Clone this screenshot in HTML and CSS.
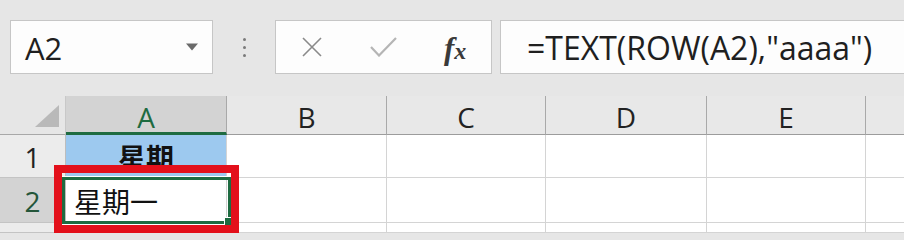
FILE: index.html
```html
<!DOCTYPE html>
<html lang="zh-CN">
<head>
<meta charset="utf-8">
<title>Excel</title>
<link rel="stylesheet" href="styles.css">
</head>
<body>
<div class="app">
  <div class="toolbar">
    <div class="namebox">
      <span class="name">A2</span>
      <svg class="caret" width="12" height="8" viewBox="0 0 12 8"><path d="M0 0.5 H12 L6 7.5 Z" fill="#6a6a6a"/></svg>
    </div>
    <div class="dots"><span></span><span></span><span></span></div>
    <div class="fbuttons">
      <div class="slot">
        <svg width="22" height="20" viewBox="0 0 22 20"><path d="M2 1 L20 19 M20 1 L2 19" stroke="#8a8a8a" stroke-width="1.6" fill="none"/></svg>
      </div>
      <div class="slot">
        <svg width="27" height="20" viewBox="0 0 27 20"><path d="M1 10 L9 18.5 L26 1" stroke="#b5b5b5" stroke-width="2.2" fill="none"/></svg>
      </div>
      <div class="slot fx"><span class="f">f</span><span class="x">x</span></div>
    </div>
    <div class="formula">=TEXT(ROW(A2),"aaaa")</div>
  </div>

  <div class="sheet">
    <div class="corner"><svg width="24" height="22" viewBox="0 0 24 22"><path d="M24 0 V22 H0 Z" fill="#b9b9b9"/></svg></div>
    <div class="colhead active">A</div>
    <div class="colhead">B</div>
    <div class="colhead">C</div>
    <div class="colhead">D</div>
    <div class="colhead">E</div>
    <div class="colhead last"></div>

    <div class="rowhead">1</div>
    <div class="cell title">星期</div>
    <div class="cell"></div>
    <div class="cell"></div>
    <div class="cell"></div>
    <div class="cell"></div>
    <div class="cell last"></div>

    <div class="rowhead active">2</div>
    <div class="cell value">星期一</div>
    <div class="cell"></div>
    <div class="cell"></div>
    <div class="cell"></div>
    <div class="cell"></div>
    <div class="cell last"></div>

    <div class="rowhead"></div>
    <div class="cell"></div>
    <div class="cell"></div>
    <div class="cell"></div>
    <div class="cell"></div>
    <div class="cell"></div>
    <div class="cell last"></div>

    <div class="selection"><div class="handle"></div></div>
    <div class="annotation"></div>
  </div>
</div>
</body>
</html>
```

FILE: styles.css
```css
html, body {
  margin: 0;
  padding: 0;
  background: #e6e6e6;
  overflow: hidden;
}

.app {
  width: 904px;
  height: 233px;
  overflow: hidden;
  font-family: "Open Sans", "Noto Sans CJK SC", sans-serif;
  color: #222;
}

.toolbar {
  box-sizing: border-box;
  height: 96px;
  padding: 20px 0 0 10px;
  display: flex;
  align-items: flex-start;
}

.namebox {
  box-sizing: border-box;
  width: 203px;
  height: 54px;
  background: #fdfdfd;
  border: 1px solid #c6c6c6;
  display: flex;
  align-items: center;
  padding: 0 14px 0 14px;
}

.name {
  font-size: 31px;
  line-height: 1;
  color: #1f1f1f;
  margin-top: 2px;
}

.caret {
  margin-left: auto;
}

.dots {
  width: 62px;
  height: 54px;
  display: flex;
  flex-direction: column;
  align-items: center;
  justify-content: center;
  gap: 5px;
}

.dots span {
  width: 3px;
  height: 3px;
  border-radius: 50%;
  background: #7a7a7a;
}

.fbuttons {
  box-sizing: border-box;
  width: 217px;
  height: 54px;
  background: #fdfdfd;
  border: 1px solid #c6c6c6;
  display: flex;
  align-items: center;
}

.slot {
  width: 72px;
  display: flex;
  justify-content: center;
  align-items: center;
}

.fx {
  font-family: "Liberation Serif", "DejaVu Serif", serif;
  font-style: italic;
  color: #3a3a3a;
  line-height: 1;
  align-items: baseline;
  margin-top: 2px;
}

.fx .f {
  font-size: 31px;
  font-weight: 700;
}

.fx .x {
  font-size: 24px;
  font-weight: 700;
  margin-left: 0;
}

.formula {
  box-sizing: border-box;
  flex: 1;
  margin-left: 8px;
  margin-right: -12px;
  height: 54px;
  background: #fdfdfd;
  border: 1px solid #c6c6c6;
  padding-left: 26px;
  display: flex;
  align-items: center;
  font-size: 32px;
  color: #1f1f1f;
  white-space: nowrap;
}

.sheet {
  position: relative;
  display: grid;
  grid-template-columns: 66px 161px 160px 159px 161px 159px 1fr;
  grid-template-rows: 39px 43px 45px 10px;
}

.corner {
  box-sizing: border-box;
  background: #e6e6e6;
  border-right: 1px solid #c8c8c8;
  border-bottom: 1px solid #a8a8a8;
  display: flex;
  align-items: flex-end;
  justify-content: flex-end;
  padding: 0 6px 7px 0;
}

.colhead {
  box-sizing: border-box;
  background: #e8e8e8;
  border-right: 1px solid #a9a9a9;
  border-bottom: 1px solid #9c9c9c;
  display: flex;
  align-items: center;
  justify-content: center;
  font-size: 28px;
  line-height: 1;
  color: #222;
  padding-top: 3px;
}

.colhead.active {
  background: #d3d3d3;
  color: #1e6b41;
  border-bottom: 3px solid #1e6b41;
  padding-top: 5px;
}

.colhead.last {
  border-right: none;
}

.rowhead {
  box-sizing: border-box;
  background: #ececec;
  border-right: 1px solid #bdbdbd;
  border-bottom: 1px solid #c4c4c4;
  display: flex;
  align-items: center;
  justify-content: center;
  font-size: 28px;
  line-height: 1;
  color: #222;
  padding-top: 2px;
}

.rowhead.active {
  background: #d3d3d3;
  color: #24563a;
}

.cell {
  box-sizing: border-box;
  background: #fff;
  border-right: 1px solid #d4d4d4;
  border-bottom: 1px solid #d4d4d4;
}

.cell.last {
  border-right: none;
}

.cell.title {
  background: #9dc9ef;
  display: flex;
  align-items: center;
  justify-content: center;
  font-family: "Noto Sans CJK SC", sans-serif;
  font-weight: 700;
  font-size: 28px;
  line-height: 1;
  color: #111;
  padding-top: 1px;
}

.cell.value {
  display: flex;
  align-items: center;
  padding-left: 8px;
  font-family: "Noto Sans CJK SC", sans-serif;
  font-size: 28px;
  line-height: 1;
  color: #111;
  padding-top: 2px;
}

.selection {
  position: absolute;
  left: 62px;
  top: 81px;
  width: 169px;
  height: 47px;
  box-sizing: border-box;
  border: 3px solid #1e6b41;
  outline: 1px solid #fff;
}

.handle {
  position: absolute;
  right: -6px;
  bottom: -6px;
  width: 8px;
  height: 8px;
  background: #1e6b41;
  border: 1px solid #fff;
}

.annotation {
  position: absolute;
  left: 54px;
  top: 69px;
  width: 185px;
  height: 68px;
  box-sizing: border-box;
  border: 8px solid #e3101b;
}
```
